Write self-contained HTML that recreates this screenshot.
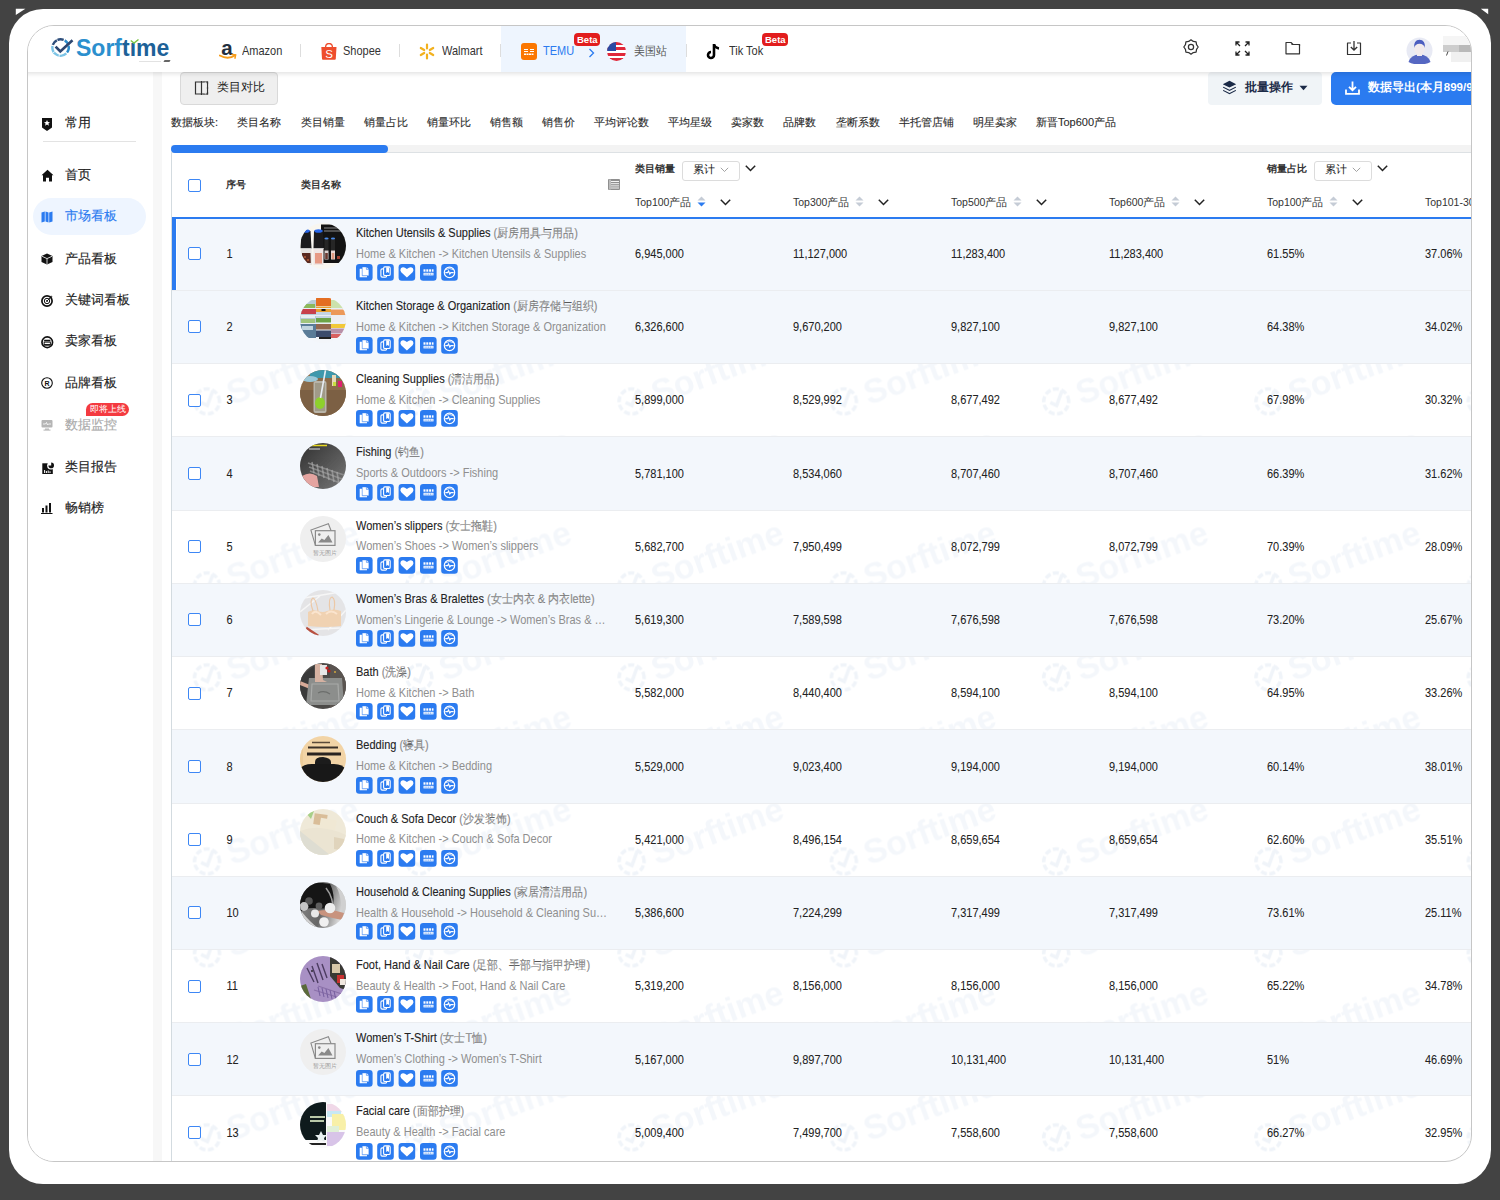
<!DOCTYPE html>
<html><head><meta charset="utf-8">
<style>
*{box-sizing:border-box;margin:0;padding:0}
html,body{width:1500px;height:1200px;overflow:hidden;background:#434343;font-family:"Liberation Sans",sans-serif;color:#333}
.a{position:absolute}
#outer{left:9px;top:9.4px;width:1482px;height:1174.4px;background:#fff;border-radius:34px}
#inner{left:27px;top:25px;width:1445px;height:1137px;border:1px solid #c6c6c6;border-radius:27px;overflow:hidden;background:#fff}
#pg{left:-28px;top:-26px;width:1500px;height:1200px}
#hdr{left:0;top:0;width:1500px;height:72px;background:#fff;box-shadow:0 1.5px 5px rgba(0,0,0,.13);z-index:5}
.nav{font-size:11px;color:#333;line-height:14px;transform:scaleY(1.1);transform-origin:0 10.8px}
.sep{width:1px;height:13px;background:#ddd;top:44px}
.beta{background:#e21d1d;color:#fff;font-weight:bold;font-size:9.5px;line-height:13px;height:13px;border-radius:4px;padding:0 3px;top:33px;text-align:center}
#side{left:27px;top:72px;width:126px;height:1100px;background:#fff}
#strip{left:153px;top:72px;width:9px;height:1100px;background:#f7f7f7}
.si{left:65px;font-size:13px;line-height:16px;color:#222;-webkit-text-stroke:0.15px currentColor}
.tab{top:114.5px;font-size:11px;line-height:15px;color:#2a2a2a;white-space:nowrap;-webkit-text-stroke:0.1px #2a2a2a}
.sic{left:41px;width:12px;height:12px}
</style><style>
.cb{width:13px;height:13px;border:1.3px solid #3d87f5;border-radius:2px;background:#fff}
.th{font-size:10px;line-height:14px;font-weight:bold;color:#333;white-space:nowrap}
.td{font-size:11px;line-height:14px;color:#222;white-space:nowrap;-webkit-text-stroke:0.05px #222;transform:scaleY(1.1);transform-origin:0 10.8px}
.tt{font-size:11px;line-height:14px;color:#222;white-space:nowrap;-webkit-text-stroke:0.1px #222;transform:scaleY(1.1);transform-origin:0 10.8px}
.ts{font-size:11px;line-height:14px;color:#8f8f8f;white-space:nowrap;width:254px;overflow:hidden;text-overflow:ellipsis;transform:scaleY(1.1);transform-origin:0 10.8px}
.th0{width:46px;height:46px;border-radius:50%;overflow:hidden}
</style></head><body><svg width="0" height="0" style="position:absolute"><defs>
<symbol id="ibtn" viewBox="0 0 103 17">
<g fill="#2b7bf0"><rect x="0" y="0" width="16.6" height="16.8" rx="3.2"/><rect x="21.2" y="0" width="16.6" height="16.8" rx="3.2"/><rect x="42.6" y="0" width="16.6" height="16.8" rx="3.2"/><rect x="64" y="0" width="16.6" height="16.8" rx="3.2"/><rect x="85.2" y="0" width="16.6" height="16.8" rx="3.2"/></g>
<g fill="#fff">
<path d="M3.7 4.8 H6.5 V12 H11 V13.3 H3.7 Z"/><path d="M6.2 2.9 H10.6 L12.9 5.2 V11.8 H6.2 Z" stroke="#2b7bf0" stroke-width="0.5"/><path d="M10.4 2.9 V5.4 H12.9" fill="none" stroke="#2b7bf0" stroke-width="0.6"/>
</g>
<g fill="none" stroke="#fff" stroke-width="1.1"><rect x="24.9" y="4.9" width="5.8" height="8.2" rx="1.3"/><rect x="27.6" y="2.9" width="6.6" height="8.6" rx="1.3" fill="#2b7bf0"/></g><path d="M30.2 3.2 H33 V9 L31.6 8 L30.2 9 Z" fill="#fff"/>
<path d="M50.9 13.4 L45.2 8.2 Q43.6 6.2 44.9 4.3 Q47.2 1.9 50.9 4.9 Q54.6 1.9 56.9 4.3 Q58.2 6.2 56.6 8.2 Z" fill="#fff"/>
<g fill="#fff"><rect x="67.5" y="5.3" width="2" height="2.4"/><rect x="70.3" y="5.3" width="2" height="2.4"/><rect x="73.1" y="5.3" width="2" height="2.4"/><rect x="75.9" y="5.3" width="1.6" height="2.4"/><rect x="67.5" y="8.8" width="10" height="2.6"/></g><path d="M68.5 10.1 H76.5" stroke="#2b7bf0" stroke-width="0.8" stroke-dasharray="1.2 0.6"/>
<circle cx="93.5" cy="8.4" r="5.2" fill="none" stroke="#fff" stroke-width="1.2"/><path d="M89.3 8.6 H91.6 L92.6 7 L93.8 10 L94.8 8.6 H97.7" fill="none" stroke="#fff" stroke-width="1.1"/><path d="M90 5.5 Q93.5 3.5 97 5.5" fill="none" stroke="#fff" stroke-width="0.8"/>
</symbol></defs></svg>
<div id="outer" class="a"></div>
<svg class="a" style="left:0;top:0" width="1500" height="20"><path d="M15.8 8.7 H25.4 L15.8 15 Z M1480.8 8.7 H1488.2 V14.3 Z" fill="#fff"/></svg>
<div id="inner" class="a"><div id="pg" class="a">

<div id="hdr" class="a">
  <svg class="a" style="left:50px;top:37px" width="24" height="21" viewBox="0 0 24 21"><g fill="none" stroke-width="2.4"><path d="M2.80 7.97 A8.2 8.2 0 0 1 13.67 2.90" stroke="#2f4f7c"/><path d="M14.70 3.40 A8.2 8.2 0 0 1 17.06 15.55" stroke="#2b8bcb"/><path d="M16.30 16.40 A8.2 8.2 0 0 1 2.52 9.08" stroke="#7cc4e6"/></g><g fill="none" stroke="#fff" stroke-width="0.8"><path d="M7.98 4.88 L6.29 1.26"/><path d="M16.59 8.90 L20.45 7.86"/><path d="M9.52 16.61 L8.83 20.55"/><path d="M5.52 14.06 L2.24 16.35"/></g><path d="M5.6 9.6 L10.3 14.4 L22.5 3.2" fill="none" stroke="#2d4670" stroke-width="2.7"/></svg>
  <div class="a" style="left:76px;top:35px;font-size:23px;font-weight:bold;line-height:26px;white-space:nowrap"><span style="color:#2b8fce">Sorf</span><span style="color:#1d6198">t&#305;me</span></div>
  <svg class="a" style="left:130px;top:38.5px" width="9" height="5"><path d="M0.8 1.5 L4 4 L8.5 0.5" fill="none" stroke="#7cc444" stroke-width="1.4"/></svg>
  <div class="a" style="left:139px;top:60.5px;width:22px;height:1.5px;background:#e2e2e2"></div>
  <div class="a" style="left:163.5px;top:60px;width:6px;height:2px;background:#666;transform:skewX(-30deg)"></div>
<div class="a" style="left:501px;top:26px;width:185px;height:46px;background:#eef5fe"></div>

  <svg class="a" style="left:219px;top:42px" width="18" height="18" viewBox="0 0 18 18"><text x="2.3" y="12.8" font-size="20.5" font-weight="bold" font-family="Liberation Sans" fill="#232f3e">a</text><path d="M0.8 13.5 Q9 18.2 16.2 13.2" fill="none" stroke="#f79d1b" stroke-width="1.8" stroke-linecap="round"/><path d="M13 12.6 L16.6 12.9 L16 16.2" fill="none" stroke="#f79d1b" stroke-width="1.5" stroke-linecap="round"/></svg>
  <div class="a nav" style="left:242px;top:44px">Amazon</div>
  <div class="a sep" style="left:300px"></div>
  <svg class="a" style="left:321px;top:43px" width="16" height="17" viewBox="0 0 16 17"><path d="M0.3 3.9 H15.5 L14.8 15.8 Q14.7 16.7 13.9 16.7 H1.9 Q1.1 16.7 1 15.8 Z" fill="#ee4d2d"/><path d="M4.6 4 Q4.8 0.5 8 0.5 Q11.2 0.5 11.4 4" fill="none" stroke="#ee4d2d" stroke-width="1.3"/><text x="8" y="14.8" text-anchor="middle" font-size="11.5" font-family="Liberation Sans" fill="#fff">S</text></svg>
  <div class="a nav" style="left:343px;top:44px">Shopee</div>
  <div class="a sep" style="left:399px"></div>
  <div class="a" style="left:419px;top:43px;width:16px;height:17px"><svg width="16" height="17" viewBox="0 0 16 17"><g stroke="#f2b11e" stroke-width="2.2" stroke-linecap="round"><path d="M8 1.5V5.5M8 11.5V15.5M1.8 5L5.2 7M10.8 10L14.2 12M1.8 12L5.2 10M10.8 7L14.2 5"/></g></svg></div>
  <div class="a nav" style="left:442px;top:44px">Walmart</div>
  <div class="a sep" style="left:500px"></div>
  <div class="a" style="left:521px;top:43px;width:16px;height:17px;background:#fb7701;border-radius:3px"></div><svg class="a" style="left:521px;top:43px" width="16" height="17"><path d="M3 6.5H7M3 8.5H7M9 6.5H13M9 8.5H13" stroke="#fff" stroke-width="1.1"/><path d="M3 11.2H13" stroke="#fff" stroke-width="1.6" stroke-dasharray="2 0.5"/></svg>
  <div class="a nav" style="left:543px;top:44px;color:#2b7bf0">TEMU</div>
  <div class="a beta" style="left:574px;width:26px">Beta</div>
  <div class="a" style="left:588px;top:44px;width:7px;height:10px"><svg width="7" height="10"><path d="M1.5 1 L5.5 5 L1.5 9" fill="none" stroke="#2b7bf0" stroke-width="1.3"/></svg></div>
  <div class="a" style="left:607px;top:42px;width:19px;height:19px;border-radius:50%;overflow:hidden;background:repeating-linear-gradient(#e0283a 0 2.7px,#fff 2.7px 5.4px)"><div class="a" style="left:0;top:0;width:9px;height:9px;background:#2a4aa3"></div></div>
  <div class="a nav" style="left:634px;top:44px;color:#555;font-size:11px">美国站</div>
  <div class="a sep" style="left:686px"></div>
  <div class="a" style="left:706px;top:43px;width:15px;height:17px"><svg width="15" height="17" viewBox="0 0 15 17"><path d="M8 1 V12 A3 3 0 1 1 5 9" fill="none" stroke="#000" stroke-width="2.6"/><path d="M8 1.5 Q9 5 13 5.5" fill="none" stroke="#000" stroke-width="2.4"/></svg></div>
  <div class="a nav" style="left:729px;top:44px">Tik Tok</div>
  <div class="a beta" style="left:762px;width:26px">Beta</div>

  <!-- right icons -->
  <svg class="a" style="left:1183px;top:39px" width="16" height="16" viewBox="0 0 16 16"><path d="M8.00 0.80 L10.30 2.46 L13.09 2.91 L13.54 5.70 L15.20 8.00 L13.54 10.30 L13.09 13.09 L10.30 13.54 L8.00 15.20 L5.70 13.54 L2.91 13.09 L2.46 10.30 L0.80 8.00 L2.46 5.70 L2.91 2.91 L5.70 2.46 Z" fill="none" stroke="#333" stroke-width="1.25" stroke-linejoin="round"/><circle cx="8" cy="8" r="2.6" fill="none" stroke="#333" stroke-width="1.25"/></svg>
  <div class="a" style="left:1235px;top:41px;width:15px;height:15px"><svg width="15" height="15" viewBox="0 0 15 15"><g fill="none" stroke="#222" stroke-width="1.3"><path d="M1 4.5V1H4.5M1 1L5 5M10.5 1H14V4.5M14 1L10 5M1 10.5V14H4.5M1 14L5 10M14 10.5V14H10.5M14 14L10 10"/></g></svg></div>
  <div class="a" style="left:1285px;top:41px;width:16px;height:14px"><svg width="16" height="14" viewBox="0 0 16 14"><path d="M1 1.5 H6 L8 3.5 H14.5 V12.8 H1 Z" fill="none" stroke="#333" stroke-width="1.2" stroke-linejoin="round"/><path d="M6.5 3.5 H14.5 V5" fill="none" stroke="#333" stroke-width="1.2"/></svg></div>
  <div class="a" style="left:1346px;top:40px;width:16px;height:16px"><svg width="16" height="16" viewBox="0 0 16 16"><path d="M5 3 H1.5 V14.5 H14.5 V3 H11" fill="none" stroke="#333" stroke-width="1.2" stroke-linejoin="round"/><path d="M8 1 V10 M4.8 7 L8 10 L11.2 7" fill="none" stroke="#333" stroke-width="1.3"/></svg></div>
  <svg class="a" style="left:1406px;top:37px" width="27" height="27" viewBox="0 0 27 27"><circle cx="13.5" cy="13.5" r="13" fill="#e8eaf4"/><path d="M2.5 25 Q5 17.5 13.5 17.5 Q22 17.5 24.5 25 Q20 27.5 13.5 27.5 Q7 27.5 2.5 25Z" fill="#5567c2"/><ellipse cx="13.5" cy="11.5" rx="5.3" ry="6.8" fill="#f1eaec"/><rect x="11" y="16" width="5" height="3" fill="#f1eaec"/><path d="M8 11 Q7.5 3 13.5 2.8 Q19.5 3 19 11 Q18 7 13.5 6.8 Q9 7 8 11Z" fill="#4b5ec0"/></svg>
  <div class="a" style="left:1443px;top:36px;width:30px;height:9px;background:#f5f5f5"></div>
  <div class="a" style="left:1443px;top:45px;width:30px;height:7px;background:#cdcdcd"></div>
  <div class="a" style="left:1459px;top:45px;width:14px;height:7px;background:#b9b9b9"></div>
  <div class="a" style="left:1451px;top:52px;width:22px;height:10px;background:#f0f0f0"></div>
  <svg class="a" style="left:1445px;top:51px" width="4" height="5"><path d="M3 0.5 L1.5 4.5" stroke="#333" stroke-width="0.9"/></svg>
</div>

<div id="side" class="a">
</div>
<div id="strip" class="a"></div>
<div class="a" style="left:43px;top:140.5px;width:93px;height:1px;background:#e3e3e3"></div>
<div class="a" style="left:33px;top:197.5px;width:113px;height:37px;border-radius:18.5px;background:#eef5ff"></div>
<div class="a si" style="top:115px">常用</div>
<div class="a si" style="top:166.5px">首页</div>
<div class="a si" style="top:207.6px;color:#2b7bf0">市场看板</div>
<div class="a si" style="top:250.6px">产品看板</div>
<div class="a si" style="top:292px">关键词看板</div>
<div class="a si" style="top:333.4px">卖家看板</div>
<div class="a si" style="top:375px">品牌看板</div>
<div class="a si" style="top:416.8px;color:#aaa">数据监控</div>
<div class="a si" style="top:458.5px">类目报告</div>
<div class="a si" style="top:500px">畅销榜</div>
<div class="a" style="left:86px;top:402.5px;width:43px;height:13px;border-radius:7px 7px 7px 0;background:#f43a40;color:#fff;font-size:8.5px;line-height:13px;text-align:center">即将上线</div>
<!-- icons -->
<svg class="a" style="left:41px;top:117px" width="12" height="15" viewBox="0 0 12 15"><path d="M1 1 H11 V10.5 L6 14 L1 10.5 Z" fill="#111"/><path d="M6 3 L6.9 5 L9 5.2 L7.4 6.6 L7.9 8.7 L6 7.6 L4.1 8.7 L4.6 6.6 L3 5.2 L5.1 5 Z" fill="#fff"/></svg>
<svg class="a" style="left:41px;top:169px" width="13" height="13" viewBox="0 0 13 13"><path d="M6.5 0.8 L12.5 6.3 L11 6.3 V12.5 H8 V8.8 H5 V12.5 H2 V6.3 H0.5 Z" fill="#111"/></svg>
<svg class="a" style="left:41px;top:210.5px" width="12" height="12" viewBox="0 0 12 12"><path d="M0.5 1.5 L3.8 0.5 V10.5 L0.5 11.5 Z M4.5 0.5 L7.5 1.5 V11.5 L4.5 10.5 Z M8.2 1.5 L11.5 0.5 V10.5 L8.2 11.5 Z" fill="#2b7bf0"/></svg>
<svg class="a" style="left:41px;top:252.5px" width="12" height="12" viewBox="0 0 12 12"><path d="M6 0.5 L11.5 3 V9 L6 11.5 L0.5 9 V3 Z" fill="#111"/><path d="M0.8 3.2 L6 5.6 L11.2 3.2 M6 5.6 V11.3" fill="none" stroke="#fff" stroke-width="0.8"/></svg>
<svg class="a" style="left:41px;top:294.8px" width="12" height="12" viewBox="0 0 12 12"><circle cx="6" cy="6" r="5.1" fill="none" stroke="#111" stroke-width="1.7"/><circle cx="6" cy="6" r="2.7" fill="none" stroke="#111" stroke-width="1"/><circle cx="6" cy="6" r="0.9" fill="#111"/><path d="M6 6 L10 2" stroke="#111" stroke-width="0.9"/><path d="M9 1.5 L10.8 1.2 L10.5 3" fill="none" stroke="#111" stroke-width="0.8"/></svg>
<svg class="a" style="left:41px;top:336px" width="12.5" height="12.5" viewBox="0 0 12 12"><circle cx="6" cy="6" r="5.1" fill="#fff" stroke="#111" stroke-width="1.6"/><rect x="3" y="3.6" width="6" height="1.6" fill="#111"/><rect x="3" y="5.9" width="6" height="2.6" fill="none" stroke="#111" stroke-width="0.9"/><rect x="3" y="7.8" width="6" height="1.4" fill="#111"/></svg>
<svg class="a" style="left:41px;top:377px" width="12" height="12" viewBox="0 0 12 12"><circle cx="6" cy="6" r="5.3" fill="none" stroke="#111" stroke-width="1.1"/><text x="6" y="8.6" text-anchor="middle" font-size="7" font-weight="bold" font-family="Liberation Sans" fill="#111">R</text></svg>
<svg class="a" style="left:41px;top:419px" width="12" height="12" viewBox="0 0 12 12"><rect x="0.5" y="1" width="11" height="7.5" rx="1" fill="#b5b5b5"/><path d="M2 5 H4.5 L5.5 3.5 L6.5 6 L7.5 5 H10" fill="none" stroke="#fff" stroke-width="0.8"/><rect x="4" y="9.5" width="4" height="1.3" fill="#b5b5b5"/><rect x="2.5" y="10.6" width="7" height="1" fill="#b5b5b5"/></svg>
<svg class="a" style="left:41.5px;top:461.5px" width="12" height="12.5" viewBox="0 0 12 12.5"><rect x="0.3" y="1.3" width="10.5" height="11" fill="#111"/><circle cx="9" cy="3.6" r="3.9" fill="#fff"/><path d="M9.2 3.4 V0.6 A2.8 2.8 0 1 1 6.4 3.4 Z" fill="#111"/><path d="M2.6 11 V8 M4.4 11 V9 M6.2 11 V8.5 M8 11 V9.3" stroke="#fff" stroke-width="1"/></svg>
<svg class="a" style="left:41px;top:502px" width="12" height="12" viewBox="0 0 12 12"><rect x="1" y="6" width="2" height="4.5" fill="#111"/><rect x="4.5" y="3.5" width="2" height="7" fill="#111"/><rect x="8" y="1" width="2" height="9.5" fill="#111"/><rect x="0" y="11" width="11.5" height="1" fill="#111"/></svg>

<div id="main" class="a" style="left:162px;top:72px;width:1309px;height:1100px"></div>
<!-- compare btn -->
<div class="a" style="left:180px;top:72px;width:98px;height:33px;background:#efefef;border:1px solid #d9d9d9;border-radius:4px"></div>
<svg class="a" style="left:194px;top:81px" width="15" height="14" viewBox="0 0 15 14"><path d="M1.5 1 H13.5 V13 H1.5 Z" fill="none" stroke="#333" stroke-width="1.2"/><path d="M7.5 0 V14" stroke="#333" stroke-width="1.2"/><path d="M9.5 1.5 H12.5 V12.5 H9.5 Z" fill="#efefef"/><path d="M9.5 1 H10.5 M12.5 1 H13.5 V3 M13.5 6 V8 M13.5 11 V13 H12.5 M10.5 13 H9.5" stroke="#333" stroke-width="1.2" fill="none"/></svg>
<div class="a" style="left:216.5px;top:79.3px;font-size:11.6px;line-height:15px;color:#222;font-weight:500">类目对比</div>
<!-- batch btn -->
<div class="a" style="left:1208px;top:72px;width:114px;height:33px;background:#f0f4f7;border-radius:4px"></div>
<svg class="a" style="left:1222px;top:80px" width="15" height="15" viewBox="0 0 15 15"><path d="M7.5 0.8 L14.2 4.2 L7.5 7.6 L0.8 4.2 Z" fill="#1b2a47"/><path d="M1.5 6.8 L7.5 9.8 L13.5 6.8 L14.2 7.6 L7.5 11 L0.8 7.6 Z" fill="#1b2a47"/><path d="M1.5 10 L7.5 13 L13.5 10 L14.2 10.8 L7.5 14.2 L0.8 10.8 Z" fill="#1b2a47"/></svg>
<div class="a" style="left:1245px;top:80px;font-size:11.5px;line-height:15px;color:#1b2a47;font-weight:bold">批量操作</div>
<svg class="a" style="left:1299px;top:85px" width="9" height="6"><path d="M0.5 0.8 H8.5 L4.5 5.2 Z" fill="#1b2a47"/></svg>
<!-- export btn -->
<div class="a" style="left:1331px;top:72px;width:160px;height:33px;background:#2b7bf0;border-radius:5px"></div>
<svg class="a" style="left:1345px;top:81px" width="15" height="14" viewBox="0 0 15 14"><path d="M7.5 0.5 V9 M4 5.8 L7.5 9.2 L11 5.8" fill="none" stroke="#fff" stroke-width="1.8"/><path d="M1 8.5 V12.8 H14 V8.5" fill="none" stroke="#fff" stroke-width="1.8"/></svg>
<div class="a" style="left:1368px;top:80px;font-size:11.5px;line-height:15px;color:#fff;font-weight:bold;white-space:nowrap">数据导出(本月899/9</div>

<!-- tabs -->
<div class="a tab" style="left:171px">数据板块:</div>
<div class="a tab" style="left:237px">类目名称</div>
<div class="a tab" style="left:301px">类目销量</div>
<div class="a tab" style="left:364px">销量占比</div>
<div class="a tab" style="left:427px">销量环比</div>
<div class="a tab" style="left:490px">销售额</div>
<div class="a tab" style="left:542px">销售价</div>
<div class="a tab" style="left:594px">平均评论数</div>
<div class="a tab" style="left:668px">平均星级</div>
<div class="a tab" style="left:731px">卖家数</div>
<div class="a tab" style="left:783px">品牌数</div>
<div class="a tab" style="left:836px">垄断系数</div>
<div class="a tab" style="left:899px">半托管店铺</div>
<div class="a tab" style="left:973px">明星卖家</div>
<div class="a tab" style="left:1036px">新晋Top600产品</div>

<!-- scrollbar -->
<div class="a" style="left:171px;top:144.5px;width:1300px;height:8.5px;background:#f3f3f3;border-bottom:1px solid #dde1e4"></div>
<div class="a" style="left:171px;top:145px;width:216.5px;height:8px;background:#2b7bf0;border-radius:4px"></div>
<!-- table -->
<div class="a" style="left:171px;top:153px;width:1px;height:1010px;background:#d3dbe0;z-index:2"></div>
<div class="a" style="left:172px;top:153px;width:1300px;height:64px;background:#fff"></div>
<div class="a cb" style="left:188px;top:179px"></div>
<div class="a th" style="left:226px;top:177.5px">序号</div>
<div class="a th" style="left:300.5px;top:177.5px">类目名称</div>
<svg class="a" style="left:608px;top:178.5px" width="12" height="11" viewBox="0 0 12 11"><rect x="0" y="0" width="12" height="11" rx="1" fill="#8f8f8f"/><path d="M3 2.5H11M3 4.7H11M3 6.9H11M3 9H11" stroke="#fff" stroke-width="0.9"/><path d="M2 0.5V10.5" stroke="#fff" stroke-width="0.8"/></svg>
<div class="a th" style="left:635px;top:162px">类目销量</div>
<div class="a" style="left:681.5px;top:160.5px;width:58px;height:20px;border:1px solid #dcdcdc;border-radius:3px;background:#fff"></div>
<div class="a th" style="left:692.5px;top:161.5px;font-size:10.5px;color:#222;font-weight:500">累计</div>
<svg class="a" style="left:719.5px;top:167px" width="9" height="6"><path d="M0.8 0.8 L4.5 4.5 L8.2 0.8" fill="none" stroke="#999" stroke-width="0.9"/></svg>
<svg class="a" style="left:745px;top:165px" width="11" height="7"><path d="M0.8 0.8 L5.5 5.5 L10.2 0.8" fill="none" stroke="#222" stroke-width="1.5"/></svg>
<div class="a th" style="left:1267px;top:162px">销量占比</div>
<div class="a" style="left:1313.5px;top:160.5px;width:58px;height:20px;border:1px solid #dcdcdc;border-radius:3px;background:#fff"></div>
<div class="a th" style="left:1324.5px;top:161.5px;font-size:10.5px;color:#222;font-weight:500">累计</div>
<svg class="a" style="left:1351.5px;top:167px" width="9" height="6"><path d="M0.8 0.8 L4.5 4.5 L8.2 0.8" fill="none" stroke="#999" stroke-width="0.9"/></svg>
<svg class="a" style="left:1377px;top:165px" width="11" height="7"><path d="M0.8 0.8 L5.5 5.5 L10.2 0.8" fill="none" stroke="#222" stroke-width="1.5"/></svg>
<div class="a th" style="left:635px;top:195px;font-weight:normal;color:#333;font-size:10.5px">Top100产品</div>
<svg class="a" style="left:697px;top:195.5px" width="9" height="11"><path d="M0.5 4.5 L4.5 0.5 L8.5 4.5Z" fill="#c5ccd6"/><path d="M0.5 6.5 L4.5 10.5 L8.5 6.5Z" fill="#2b7bf0"/></svg>
<svg class="a" style="left:720px;top:198.5px" width="11" height="7"><path d="M0.8 0.8 L5.5 5.5 L10.2 0.8" fill="none" stroke="#222" stroke-width="1.5"/></svg>
<div class="a th" style="left:793px;top:195px;font-weight:normal;color:#333;font-size:10.5px">Top300产品</div>
<svg class="a" style="left:855px;top:195.5px" width="9" height="11"><path d="M0.5 4.5 L4.5 0.5 L8.5 4.5Z" fill="#c5ccd6"/><path d="M0.5 6.5 L4.5 10.5 L8.5 6.5Z" fill="#c5ccd6"/></svg>
<svg class="a" style="left:878px;top:198.5px" width="11" height="7"><path d="M0.8 0.8 L5.5 5.5 L10.2 0.8" fill="none" stroke="#222" stroke-width="1.5"/></svg>
<div class="a th" style="left:951px;top:195px;font-weight:normal;color:#333;font-size:10.5px">Top500产品</div>
<svg class="a" style="left:1013px;top:195.5px" width="9" height="11"><path d="M0.5 4.5 L4.5 0.5 L8.5 4.5Z" fill="#c5ccd6"/><path d="M0.5 6.5 L4.5 10.5 L8.5 6.5Z" fill="#c5ccd6"/></svg>
<svg class="a" style="left:1036px;top:198.5px" width="11" height="7"><path d="M0.8 0.8 L5.5 5.5 L10.2 0.8" fill="none" stroke="#222" stroke-width="1.5"/></svg>
<div class="a th" style="left:1109px;top:195px;font-weight:normal;color:#333;font-size:10.5px">Top600产品</div>
<svg class="a" style="left:1171px;top:195.5px" width="9" height="11"><path d="M0.5 4.5 L4.5 0.5 L8.5 4.5Z" fill="#c5ccd6"/><path d="M0.5 6.5 L4.5 10.5 L8.5 6.5Z" fill="#c5ccd6"/></svg>
<svg class="a" style="left:1194px;top:198.5px" width="11" height="7"><path d="M0.8 0.8 L5.5 5.5 L10.2 0.8" fill="none" stroke="#222" stroke-width="1.5"/></svg>
<div class="a th" style="left:1267px;top:195px;font-weight:normal;color:#333;font-size:10.5px">Top100产品</div>
<svg class="a" style="left:1329px;top:195.5px" width="9" height="11"><path d="M0.5 4.5 L4.5 0.5 L8.5 4.5Z" fill="#c5ccd6"/><path d="M0.5 6.5 L4.5 10.5 L8.5 6.5Z" fill="#c5ccd6"/></svg>
<svg class="a" style="left:1352px;top:198.5px" width="11" height="7"><path d="M0.8 0.8 L5.5 5.5 L10.2 0.8" fill="none" stroke="#222" stroke-width="1.5"/></svg>
<div class="a th" style="left:1425px;top:195px;font-weight:normal;color:#333;font-size:10.5px">Top101-300产品</div>
<div class="a" style="left:172px;top:217px;width:1300px;height:2px;background:#2b7bf0;z-index:1"></div>
<svg class="a" style="left:172px;top:219px" width="1300" height="945"><defs><g id="wmu" fill="none" stroke="#f0f4f9"><circle cx="0" cy="0" r="12.5" stroke-width="3.5" stroke-dasharray="6 2.5"/><path d="M-6 -1 L-1 4 L9 -8" stroke-width="3.5"/><text x="22" y="12" font-size="34" font-weight="bold" font-family="Liberation Sans" fill="#f4f7fb" stroke="none">Sorftime</text></g><pattern id="wm" patternUnits="userSpaceOnUse" width="212.3" height="92" x="141.3" y="44.4"><use href="#wmu" transform="translate(-106.3 -46.0) rotate(-20)"/><use href="#wmu" transform="translate(-106.3 46.0) rotate(-20)"/><use href="#wmu" transform="translate(-106.3 138.0) rotate(-20)"/><use href="#wmu" transform="translate(106.0 -46.0) rotate(-20)"/><use href="#wmu" transform="translate(106.0 46.0) rotate(-20)"/><use href="#wmu" transform="translate(106.0 138.0) rotate(-20)"/><use href="#wmu" transform="translate(318.3 -46.0) rotate(-20)"/><use href="#wmu" transform="translate(318.3 46.0) rotate(-20)"/><use href="#wmu" transform="translate(318.3 138.0) rotate(-20)"/></pattern></defs><rect width="1300" height="945" fill="url(#wm)"/></svg>
<div class="a" style="left:172px;top:217.75px;width:1300px;height:73.23px;background:#f3f7fc;border-bottom:1px solid #ebedf0"></div>
<div class="a cb" style="left:188px;top:247.20px"></div>
<div class="a td" style="left:226.5px;top:247.00px">1</div>
<div class="a th0" style="left:300px;top:223.40px"><svg width="46" height="46" viewBox="0 0 46 46"><rect width="46" height="46" fill="#f8f6f0"/><path d="M21 1.5 H34 Q46 8 46 20 V40 H21 Z" fill="#131313"/><path d="M24 5H40M24 8H41" stroke="#9a9a9a" stroke-width="0.9"/><path d="M1.5 8 Q6 6 10.5 8 L11.5 25 H0.5 Z" fill="#1b1b1d"/><path d="M0.5 25 H11.5 L12 42 H1 Z" fill="#e6e4e2"/><path d="M2 30 H10.5 L10.8 40 H2.2 Z" fill="#5a2a20"/><path d="M4 33h2v2h-2zM7 36h2v2h-2z" fill="#a05030"/><path d="M14 8 Q18.5 6 23 8 L23.5 25 H13.5 Z" fill="#1b1b1d"/><path d="M13.5 25 H23.5 L23.5 42 H13.5 Z" fill="#efe6e4"/><path d="M15 30 H22 V40.5 H15 Z" fill="#e79a84"/><path d="M0.5 25.5H12M13.5 25.5H23.5" stroke="#c8c8c8" stroke-width="1.2"/><ellipse cx="6" cy="8" rx="3.8" ry="1.8" fill="#2866e8"/><ellipse cx="18.5" cy="8" rx="4.2" ry="1.8" fill="#2866e8"/><rect x="24.5" y="15.5" width="4" height="12" fill="#262626"/><rect x="24.5" y="27.5" width="4" height="9" fill="#d9d2d0"/><rect x="25.2" y="30" width="2.6" height="6" fill="#6a3a30"/><rect x="31" y="15.5" width="4" height="12" fill="#262626"/><rect x="31" y="27.5" width="4" height="9" fill="#e8d8d4"/><rect x="31.7" y="30" width="2.6" height="6" fill="#e09a80"/><ellipse cx="26.5" cy="15.5" rx="2.1" ry="0.9" fill="#4a8ae8"/><ellipse cx="33" cy="15.5" rx="2.1" ry="0.9" fill="#4a8ae8"/><rect x="37" y="33" width="3" height="3" fill="#a04030"/></svg>
</div>
<div class="a tt" style="left:356px;top:225.70px">Kitchen Utensils &amp; Supplies <span style="color:#999">(厨房用具与用品)</span></div>
<div class="a ts" style="left:356px;top:246.50px">Home &amp; Kitchen -&gt; Kitchen Utensils &amp; Supplies</div>
<svg class="a" style="left:356px;top:264.00px" width="103" height="17"><use href="#ibtn"/></svg>
<div class="a td" style="left:635px;top:247.00px">6,945,000</div>
<div class="a td" style="left:793px;top:247.00px">11,127,000</div>
<div class="a td" style="left:951px;top:247.00px">11,283,400</div>
<div class="a td" style="left:1109px;top:247.00px">11,283,400</div>
<div class="a td" style="left:1267px;top:247.00px">61.55%</div>
<div class="a td" style="left:1425px;top:247.00px">37.06%</div>
<div class="a" style="left:172px;top:290.98px;width:1300px;height:73.23px;background:#f3f7fc;border-bottom:1px solid #ebedf0"></div>
<div class="a cb" style="left:188px;top:320.43px"></div>
<div class="a td" style="left:226.5px;top:320.23px">2</div>
<div class="a th0" style="left:300px;top:296.63px">
<svg width="46" height="46" viewBox="0 0 46 46"><rect width="46" height="46" fill="#f3f6fa"/><rect x="0" y="3" width="16" height="38" fill="#b8ccd8"/><rect x="2" y="7" width="13" height="4" fill="#8cb85a"/><rect x="0" y="12" width="16" height="5" fill="#c8404c"/><rect x="1" y="19" width="14" height="2" fill="#e8eef2"/><rect x="1" y="22" width="14" height="4" fill="#a0c47c"/><rect x="0" y="27" width="16" height="14" fill="#5a7c98"/><rect x="2" y="29" width="11" height="4" fill="#c0d4de"/><rect x="16" y="1" width="15" height="8" fill="#e46e22"/><rect x="16" y="9.5" width="15" height="5.5" fill="#e8a030"/><rect x="21.5" y="11" width="4" height="3" fill="#111"/><rect x="16" y="15" width="15" height="6" fill="#c4d4e4"/><rect x="16" y="21" width="15" height="4.5" fill="#6ca448"/><rect x="16" y="26" width="15" height="7" fill="#94684e"/><rect x="16" y="33" width="15" height="7" fill="#3c4c6c"/><rect x="31" y="3" width="15" height="9" fill="#cce2ac"/><rect x="31" y="12.5" width="15" height="5.5" fill="#ec9858"/><rect x="31" y="18.5" width="15" height="7" fill="#eeeef2"/><rect x="31" y="26" width="15" height="5" fill="#f2c838"/><rect x="31" y="31.5" width="15" height="5" fill="#b890a8"/><rect x="31" y="37" width="15" height="4" fill="#d86060"/><path d="M0 11.5H46M0 18.5H46M0 26.5H46M16 33H31" stroke="#e8eef4" stroke-width="1"/><path d="M19 41H31" stroke="#222" stroke-width="2.2"/></svg></div>
<div class="a tt" style="left:356px;top:298.93px">Kitchen Storage &amp; Organization <span style="color:#999">(厨房存储与组织)</span></div>
<div class="a ts" style="left:356px;top:319.73px">Home &amp; Kitchen -&gt; Kitchen Storage &amp; Organization</div>
<svg class="a" style="left:356px;top:337.23px" width="103" height="17"><use href="#ibtn"/></svg>
<div class="a td" style="left:635px;top:320.23px">6,326,600</div>
<div class="a td" style="left:793px;top:320.23px">9,670,200</div>
<div class="a td" style="left:951px;top:320.23px">9,827,100</div>
<div class="a td" style="left:1109px;top:320.23px">9,827,100</div>
<div class="a td" style="left:1267px;top:320.23px">64.38%</div>
<div class="a td" style="left:1425px;top:320.23px">34.02%</div>
<div class="a" style="left:172px;top:364.21px;width:1300px;height:73.23px;background:transparent;border-bottom:1px solid #ebedf0"></div>
<div class="a cb" style="left:188px;top:393.66px"></div>
<div class="a td" style="left:226.5px;top:393.46px">3</div>
<div class="a th0" style="left:300px;top:369.86px">
<svg width="46" height="46" viewBox="0 0 46 46"><rect width="46" height="46" fill="#8c6c4a"/><rect x="0" y="20" width="46" height="26" fill="#7c6044"/><rect x="10" y="0" width="30" height="8" fill="#3e98ac"/><ellipse cx="10" cy="9" rx="8" ry="3" fill="#9cc8d8"/><rect x="13.5" y="11" width="13" height="32" rx="2" fill="#b8b4a8"/><rect x="15" y="13" width="10" height="28" fill="#a09a88"/><ellipse cx="20" cy="33" rx="5" ry="6" fill="#8ed02c"/><path d="M25.5 0L20.5 28" stroke="#e8eef4" stroke-width="1.6"/><rect x="32" y="5" width="4" height="11" fill="#e8d8b8"/><rect x="33" y="12" width="3" height="4" fill="#c8e040"/><rect x="38" y="11" width="4" height="6" fill="#e02070"/></svg>
</div>
<div class="a tt" style="left:356px;top:372.16px">Cleaning Supplies <span style="color:#999">(清洁用品)</span></div>
<div class="a ts" style="left:356px;top:392.96px">Home &amp; Kitchen -&gt; Cleaning Supplies</div>
<svg class="a" style="left:356px;top:410.46px" width="103" height="17"><use href="#ibtn"/></svg>
<div class="a td" style="left:635px;top:393.46px">5,899,000</div>
<div class="a td" style="left:793px;top:393.46px">8,529,992</div>
<div class="a td" style="left:951px;top:393.46px">8,677,492</div>
<div class="a td" style="left:1109px;top:393.46px">8,677,492</div>
<div class="a td" style="left:1267px;top:393.46px">67.98%</div>
<div class="a td" style="left:1425px;top:393.46px">30.32%</div>
<div class="a" style="left:172px;top:437.44px;width:1300px;height:73.23px;background:#f3f7fc;border-bottom:1px solid #ebedf0"></div>
<div class="a cb" style="left:188px;top:466.89px"></div>
<div class="a td" style="left:226.5px;top:466.69px">4</div>
<div class="a th0" style="left:300px;top:443.09px">
<svg width="46" height="46" viewBox="0 0 46 46"><defs><linearGradient id="g4" x1="0" y1="0" x2="1" y2="1"><stop offset="0" stop-color="#303030"/><stop offset="1" stop-color="#787878"/></linearGradient></defs><rect width="46" height="46" fill="url(#g4)"/><path d="M8 20 L44 32 M9 24 L42 36 M10 28 L40 40" stroke="#9a9a9a" stroke-width="1.4" opacity=".7"/><path d="M12 19 L14 30 M17 21 L19 33 M22 23 L24 35 M27 25 L29 37 M32 27 L34 39 M37 29 L39 41" stroke="#b0b0b0" stroke-width="1.6" opacity=".6"/><path d="M2 33 Q10 28 17 33 L19 44 L4 44 Z" fill="#e4a4a0"/><path d="M10 2.5H27" stroke="#e8d820" stroke-width="1.3"/><path d="M9 6H20" stroke="#ddd" stroke-width="1.2"/></svg>
</div>
<div class="a tt" style="left:356px;top:445.39px">Fishing <span style="color:#999">(钓鱼)</span></div>
<div class="a ts" style="left:356px;top:466.19px">Sports &amp; Outdoors -&gt; Fishing</div>
<svg class="a" style="left:356px;top:483.69px" width="103" height="17"><use href="#ibtn"/></svg>
<div class="a td" style="left:635px;top:466.69px">5,781,100</div>
<div class="a td" style="left:793px;top:466.69px">8,534,060</div>
<div class="a td" style="left:951px;top:466.69px">8,707,460</div>
<div class="a td" style="left:1109px;top:466.69px">8,707,460</div>
<div class="a td" style="left:1267px;top:466.69px">66.39%</div>
<div class="a td" style="left:1425px;top:466.69px">31.62%</div>
<div class="a" style="left:172px;top:510.67px;width:1300px;height:73.23px;background:transparent;border-bottom:1px solid #ebedf0"></div>
<div class="a cb" style="left:188px;top:540.12px"></div>
<div class="a td" style="left:226.5px;top:539.92px">5</div>
<div class="a th0" style="left:300px;top:516.32px">
<svg width="46" height="46" viewBox="0 0 46 46"><rect width="46" height="46" fill="#efefef"/><path d="M15.4 29.4 L10.9 14.1 L28.4 7.8 L31.1 14.7" fill="none" stroke="#8a8a8a" stroke-width="1.1"/><rect x="15.4" y="14.7" width="19.6" height="14.7" fill="#efefef" stroke="#8a8a8a" stroke-width="1.2"/><path d="M18.1 26.4 L21.7 22.6 L24.4 24 L28.4 19 L32.5 26.4 Z" fill="#8a8a8a"/><circle cx="19.3" cy="18.6" r="1.3" fill="#8a8a8a"/><text x="24.6" y="39" text-anchor="middle" font-size="5.8" font-family="Liberation Sans" fill="#9a9a9a">暂无图片</text></svg></div>
<div class="a tt" style="left:356px;top:518.62px">Women’s slippers <span style="color:#999">(女士拖鞋)</span></div>
<div class="a ts" style="left:356px;top:539.42px">Women’s Shoes -&gt; Women’s slippers</div>
<svg class="a" style="left:356px;top:556.92px" width="103" height="17"><use href="#ibtn"/></svg>
<div class="a td" style="left:635px;top:539.92px">5,682,700</div>
<div class="a td" style="left:793px;top:539.92px">7,950,499</div>
<div class="a td" style="left:951px;top:539.92px">8,072,799</div>
<div class="a td" style="left:1109px;top:539.92px">8,072,799</div>
<div class="a td" style="left:1267px;top:539.92px">70.39%</div>
<div class="a td" style="left:1425px;top:539.92px">28.09%</div>
<div class="a" style="left:172px;top:583.90px;width:1300px;height:73.23px;background:#f3f7fc;border-bottom:1px solid #ebedf0"></div>
<div class="a cb" style="left:188px;top:613.35px"></div>
<div class="a td" style="left:226.5px;top:613.15px">6</div>
<div class="a th0" style="left:300px;top:589.55px">
<svg width="46" height="46" viewBox="0 0 46 46"><rect width="46" height="46" fill="#e4e4e6"/><path d="M4 8 L40 2 M0 22 L20 6 M28 40 L46 20 M2 40 L40 38" stroke="#f6f6f6" stroke-width="1.5"/><path d="M8 22 Q12 19 18 21 Q23 23 27 21 Q34 18 41 21 L41 36 Q25 38 8 36 Z" fill="#f0d2b2"/><path d="M12 24 Q15 19 21 25 M26 24 Q31 19 37 24" fill="none" stroke="#fae4ce" stroke-width="2"/><path d="M13 21 Q9 10 13 8 Q16 9 18 21 M30 20 Q28 8 32 7 Q36 9 34 20" fill="none" stroke="#ecc8a6" stroke-width="1.2"/><path d="M6 38 L18 46" stroke="#b85040" stroke-width="3"/></svg>
</div>
<div class="a tt" style="left:356px;top:591.85px">Women’s Bras &amp; Bralettes <span style="color:#999">(女士内衣 &amp; 内衣lette)</span></div>
<div class="a ts" style="left:356px;top:612.65px">Women’s Lingerie &amp; Lounge -&gt; Women’s Bras &amp; Bralettes</div>
<svg class="a" style="left:356px;top:630.15px" width="103" height="17"><use href="#ibtn"/></svg>
<div class="a td" style="left:635px;top:613.15px">5,619,300</div>
<div class="a td" style="left:793px;top:613.15px">7,589,598</div>
<div class="a td" style="left:951px;top:613.15px">7,676,598</div>
<div class="a td" style="left:1109px;top:613.15px">7,676,598</div>
<div class="a td" style="left:1267px;top:613.15px">73.20%</div>
<div class="a td" style="left:1425px;top:613.15px">25.67%</div>
<div class="a" style="left:172px;top:657.13px;width:1300px;height:73.23px;background:transparent;border-bottom:1px solid #ebedf0"></div>
<div class="a cb" style="left:188px;top:686.58px"></div>
<div class="a td" style="left:226.5px;top:686.38px">7</div>
<div class="a th0" style="left:300px;top:662.78px">
<svg width="46" height="46" viewBox="0 0 46 46"><rect width="46" height="46" fill="#4c4a48"/><rect x="30" y="0" width="16" height="46" fill="#5a5450"/><path d="M0 14 L14 3 L14 40 L0 44 Z" fill="#3a3a3a"/><path d="M0 18 L10 22 L10 26 L0 22 Z" fill="#d8aa98"/><path d="M9 15 L42 15 L44 42 L6 42 Z" fill="#8c8e8c"/><path d="M12 21 L38 21 L39 38 L11 38 Z" fill="none" stroke="#a8aaa8" stroke-width="1.2"/><path d="M18 30 Q24 27 30 31" fill="none" stroke="#6c6e6c" stroke-width="1.2"/><path d="M15 1 L22 1 L23 17 L27 19 L15 19 Z" fill="#d6b2a2"/><rect x="20" y="2" width="7" height="10" fill="#e6e6e6"/><circle cx="27" cy="5" r="1.6" fill="#d02020"/><circle cx="29" cy="8" r="1.6" fill="#c01818"/><circle cx="35" cy="9" r="1.1" fill="#c8a040"/></svg>
</div>
<div class="a tt" style="left:356px;top:665.08px">Bath <span style="color:#999">(洗澡)</span></div>
<div class="a ts" style="left:356px;top:685.88px">Home &amp; Kitchen -&gt; Bath</div>
<svg class="a" style="left:356px;top:703.38px" width="103" height="17"><use href="#ibtn"/></svg>
<div class="a td" style="left:635px;top:686.38px">5,582,000</div>
<div class="a td" style="left:793px;top:686.38px">8,440,400</div>
<div class="a td" style="left:951px;top:686.38px">8,594,100</div>
<div class="a td" style="left:1109px;top:686.38px">8,594,100</div>
<div class="a td" style="left:1267px;top:686.38px">64.95%</div>
<div class="a td" style="left:1425px;top:686.38px">33.26%</div>
<div class="a" style="left:172px;top:730.36px;width:1300px;height:73.23px;background:#f3f7fc;border-bottom:1px solid #ebedf0"></div>
<div class="a cb" style="left:188px;top:759.81px"></div>
<div class="a td" style="left:226.5px;top:759.61px">8</div>
<div class="a th0" style="left:300px;top:736.01px">
<svg width="46" height="46" viewBox="0 0 46 46"><rect width="46" height="46" fill="#f2d4a6"/><path d="M0 0V46M2 0V46" stroke="#e8c48c" stroke-width="1"/><path d="M12 6.5H30" stroke="#5a4a3a" stroke-width="1.4"/><path d="M8 11.5H38" stroke="#3a3028" stroke-width="2"/><path d="M7 18H41" stroke="#2a2420" stroke-width="2.8"/><path d="M15 26 Q15 21 23 21 Q31 22 31 26 V30 H15 Z" fill="#1c1c1c"/><path d="M0 33 Q3 28 12 28 L34 28 Q43 28 46 34 V46 H0 Z" fill="#181818"/></svg>
</div>
<div class="a tt" style="left:356px;top:738.31px">Bedding <span style="color:#999">(寝具)</span></div>
<div class="a ts" style="left:356px;top:759.11px">Home &amp; Kitchen -&gt; Bedding</div>
<svg class="a" style="left:356px;top:776.61px" width="103" height="17"><use href="#ibtn"/></svg>
<div class="a td" style="left:635px;top:759.61px">5,529,000</div>
<div class="a td" style="left:793px;top:759.61px">9,023,400</div>
<div class="a td" style="left:951px;top:759.61px">9,194,000</div>
<div class="a td" style="left:1109px;top:759.61px">9,194,000</div>
<div class="a td" style="left:1267px;top:759.61px">60.14%</div>
<div class="a td" style="left:1425px;top:759.61px">38.01%</div>
<div class="a" style="left:172px;top:803.59px;width:1300px;height:73.23px;background:transparent;border-bottom:1px solid #ebedf0"></div>
<div class="a cb" style="left:188px;top:833.04px"></div>
<div class="a td" style="left:226.5px;top:832.84px">9</div>
<div class="a th0" style="left:300px;top:809.24px">
<svg width="46" height="46" viewBox="0 0 46 46"><rect width="46" height="46" fill="#efe9d8"/><path d="M0 22 Q20 14 46 26 V46 H0 Z" fill="#ebe4d2"/><path d="M0 22 L30 46 H0 Z" fill="#deddd2"/><rect x="14" y="5" width="13" height="11" fill="#d9bd98" transform="rotate(8 20 10)"/><rect x="20" y="10" width="16" height="10" fill="#f0e8d4" transform="rotate(10 28 15)"/><path d="M6 4 L14 2 L11 10 Z" fill="#a8d088"/><path d="M34 28 L44 30 L44 42 L34 40 Z" fill="#e0d4bc"/></svg>
</div>
<div class="a tt" style="left:356px;top:811.54px">Couch &amp; Sofa Decor <span style="color:#999">(沙发装饰)</span></div>
<div class="a ts" style="left:356px;top:832.34px">Home &amp; Kitchen -&gt; Couch &amp; Sofa Decor</div>
<svg class="a" style="left:356px;top:849.84px" width="103" height="17"><use href="#ibtn"/></svg>
<div class="a td" style="left:635px;top:832.84px">5,421,000</div>
<div class="a td" style="left:793px;top:832.84px">8,496,154</div>
<div class="a td" style="left:951px;top:832.84px">8,659,654</div>
<div class="a td" style="left:1109px;top:832.84px">8,659,654</div>
<div class="a td" style="left:1267px;top:832.84px">62.60%</div>
<div class="a td" style="left:1425px;top:832.84px">35.51%</div>
<div class="a" style="left:172px;top:876.82px;width:1300px;height:73.23px;background:#f3f7fc;border-bottom:1px solid #ebedf0"></div>
<div class="a cb" style="left:188px;top:906.27px"></div>
<div class="a td" style="left:226.5px;top:906.07px">10</div>
<div class="a th0" style="left:300px;top:882.47px">
<svg width="46" height="46" viewBox="0 0 46 46"><defs><linearGradient id="g10" x1="0" y1="0" x2="1" y2="0.3"><stop offset="0" stop-color="#888"/><stop offset="0.6" stop-color="#666"/><stop offset="1" stop-color="#d8d8d8"/></linearGradient></defs><rect width="46" height="46" fill="url(#g10)"/><path d="M0 4 Q10 -2 30 2 Q36 14 32 27 L14 26 Q4 26 0 30 Z" fill="#151515"/><path d="M36 4 Q44 18 40 46 H46 V0 Z" fill="#d0d0d0"/><path d="M26 6 Q34 16 33 30" fill="none" stroke="#9a9a9a" stroke-width="1.5"/><path d="M2 30 Q10 40 18 46 H0 Z" fill="#cfcfcf"/><circle cx="9" cy="19" r="3.8" fill="#555"/><circle cx="4" cy="24.5" r="4.4" fill="#c6c6c6"/><circle cx="19" cy="24" r="3.4" fill="#5e5e5e"/><path d="M17 29 Q30 26 44 31 L42 38 Q32 36 21 33 Z" fill="#c8937e"/><circle cx="30" cy="26" r="5.3" fill="#eeeeee"/><circle cx="15" cy="31.5" r="4" fill="#e8e8e8"/><circle cx="24" cy="40" r="4.8" fill="#f0f0f0"/></svg></div>
<div class="a tt" style="left:356px;top:884.77px">Household &amp; Cleaning Supplies <span style="color:#999">(家居清洁用品)</span></div>
<div class="a ts" style="left:356px;top:905.57px">Health &amp; Household -&gt; Household &amp; Cleaning Supplies</div>
<svg class="a" style="left:356px;top:923.07px" width="103" height="17"><use href="#ibtn"/></svg>
<div class="a td" style="left:635px;top:906.07px">5,386,600</div>
<div class="a td" style="left:793px;top:906.07px">7,224,299</div>
<div class="a td" style="left:951px;top:906.07px">7,317,499</div>
<div class="a td" style="left:1109px;top:906.07px">7,317,499</div>
<div class="a td" style="left:1267px;top:906.07px">73.61%</div>
<div class="a td" style="left:1425px;top:906.07px">25.11%</div>
<div class="a" style="left:172px;top:950.05px;width:1300px;height:73.23px;background:transparent;border-bottom:1px solid #ebedf0"></div>
<div class="a cb" style="left:188px;top:979.50px"></div>
<div class="a td" style="left:226.5px;top:979.30px">11</div>
<div class="a th0" style="left:300px;top:955.70px">
<svg width="46" height="46" viewBox="0 0 46 46"><rect width="46" height="46" fill="#a890c4"/><path d="M30 0 H46 V34 L40 32 L30 20 Z" fill="#3a3a34"/><rect x="32" y="8" width="8" height="9" fill="#d8c8a8"/><rect x="37" y="19" width="7" height="8" fill="#c83030"/><rect x="40" y="23" width="6" height="6" fill="#f0e8e0"/><path d="M0 30 L6 28 L12 46 H0 Z" fill="#5a6a3a"/><path d="M7 12 L14 26 M12 10 L18 27 M17 7 L23 24 M22 8 L27 22" stroke="#4c3c60" stroke-width="1.4"/><path d="M14 34 L40 42 M18 30 L42 38" stroke="#8a70a8" stroke-width="1.2"/><path d="M18 31 L20 40 M22 32 L24 41 M26 33 L28 42 M30 34 L32 43 M34 35 L36 44" stroke="#7860a0" stroke-width="1.1"/><circle cx="12" cy="15" r="0.9" fill="#222"/></svg>
</div>
<div class="a tt" style="left:356px;top:958.00px">Foot, Hand &amp; Nail Care <span style="color:#999">(足部、手部与指甲护理)</span></div>
<div class="a ts" style="left:356px;top:978.80px">Beauty &amp; Health -&gt; Foot, Hand &amp; Nail Care</div>
<svg class="a" style="left:356px;top:996.30px" width="103" height="17"><use href="#ibtn"/></svg>
<div class="a td" style="left:635px;top:979.30px">5,319,200</div>
<div class="a td" style="left:793px;top:979.30px">8,156,000</div>
<div class="a td" style="left:951px;top:979.30px">8,156,000</div>
<div class="a td" style="left:1109px;top:979.30px">8,156,000</div>
<div class="a td" style="left:1267px;top:979.30px">65.22%</div>
<div class="a td" style="left:1425px;top:979.30px">34.78%</div>
<div class="a" style="left:172px;top:1023.28px;width:1300px;height:73.23px;background:#f3f7fc;border-bottom:1px solid #ebedf0"></div>
<div class="a cb" style="left:188px;top:1052.73px"></div>
<div class="a td" style="left:226.5px;top:1052.53px">12</div>
<div class="a th0" style="left:300px;top:1028.93px">
<svg width="46" height="46" viewBox="0 0 46 46"><rect width="46" height="46" fill="#efefef"/><path d="M15.4 29.4 L10.9 14.1 L28.4 7.8 L31.1 14.7" fill="none" stroke="#8a8a8a" stroke-width="1.1"/><rect x="15.4" y="14.7" width="19.6" height="14.7" fill="#efefef" stroke="#8a8a8a" stroke-width="1.2"/><path d="M18.1 26.4 L21.7 22.6 L24.4 24 L28.4 19 L32.5 26.4 Z" fill="#8a8a8a"/><circle cx="19.3" cy="18.6" r="1.3" fill="#8a8a8a"/><text x="24.6" y="39" text-anchor="middle" font-size="5.8" font-family="Liberation Sans" fill="#9a9a9a">暂无图片</text></svg></div>
<div class="a tt" style="left:356px;top:1031.23px">Women’s T-Shirt <span style="color:#999">(女士T恤)</span></div>
<div class="a ts" style="left:356px;top:1052.03px">Women’s Clothing -&gt; Women’s T-Shirt</div>
<svg class="a" style="left:356px;top:1069.53px" width="103" height="17"><use href="#ibtn"/></svg>
<div class="a td" style="left:635px;top:1052.53px">5,167,000</div>
<div class="a td" style="left:793px;top:1052.53px">9,897,700</div>
<div class="a td" style="left:951px;top:1052.53px">10,131,400</div>
<div class="a td" style="left:1109px;top:1052.53px">10,131,400</div>
<div class="a td" style="left:1267px;top:1052.53px">51%</div>
<div class="a td" style="left:1425px;top:1052.53px">46.69%</div>
<div class="a" style="left:172px;top:1096.51px;width:1300px;height:73.23px;background:transparent;border-bottom:1px solid #ebedf0"></div>
<div class="a cb" style="left:188px;top:1125.96px"></div>
<div class="a td" style="left:226.5px;top:1125.76px">13</div>
<div class="a th0" style="left:300px;top:1102.16px">
<svg width="46" height="46" viewBox="0 0 46 46"><rect width="46" height="46" fill="#fafafa"/><path d="M0 8 Q12 0 21 0 H26 V38 H0 Z" fill="#0e1a1c"/><rect x="27" y="2" width="19" height="8" fill="#f0d8e8"/><rect x="27" y="9" width="14" height="6" fill="#c8e8f4"/><rect x="32" y="12" width="14" height="16" fill="#f8f0a8"/><rect x="27" y="24" width="12" height="6" fill="#e0f0d8"/><rect x="27" y="30" width="19" height="14" fill="#d8c4e8"/><path d="M10 15H25 M10 19H24" stroke="#b8c8a8" stroke-width="1.8"/><path d="M21 29 L23 33 L27 33 L24 36 L25 40 L21 38 L17 40 L18 36 L15 33 L19 33 Z" fill="#e8f0f0"/><path d="M8 42H26" stroke="#222" stroke-width="2"/></svg>
</div>
<div class="a tt" style="left:356px;top:1104.46px">Facial care <span style="color:#999">(面部护理)</span></div>
<div class="a ts" style="left:356px;top:1125.26px">Beauty &amp; Health -&gt; Facial care</div>
<svg class="a" style="left:356px;top:1142.76px" width="103" height="17"><use href="#ibtn"/></svg>
<div class="a td" style="left:635px;top:1125.76px">5,009,400</div>
<div class="a td" style="left:793px;top:1125.76px">7,499,700</div>
<div class="a td" style="left:951px;top:1125.76px">7,558,600</div>
<div class="a td" style="left:1109px;top:1125.76px">7,558,600</div>
<div class="a td" style="left:1267px;top:1125.76px">66.27%</div>
<div class="a td" style="left:1425px;top:1125.76px">32.95%</div>
<div class="a" style="left:172px;top:219px;width:4px;height:71.2px;background:#2b7bf0;z-index:1"></div>
<div class="a" style="left:176px;top:219px;width:1px;height:71.2px;background:#fff;z-index:1"></div>
</div></div>
</body></html>
